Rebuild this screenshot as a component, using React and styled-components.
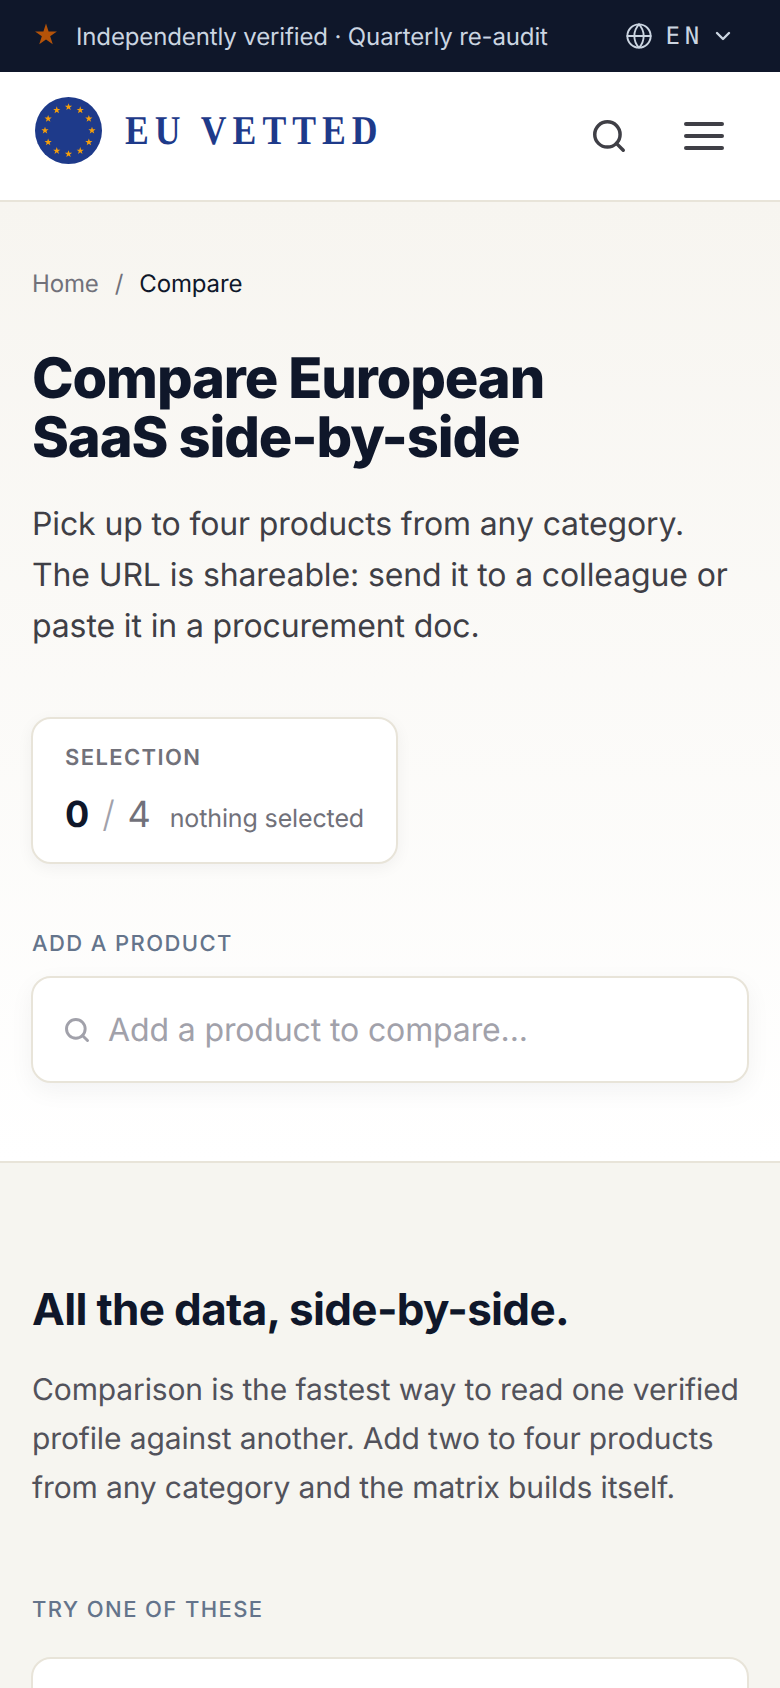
import React from 'react';
import styled, { createGlobalStyle } from 'styled-components';
import { Search, Globe, ChevronDown } from 'lucide-react';

const GlobalStyle = createGlobalStyle`
  html, body {
    margin: 0;
    padding: 0;
    background: #f6f5f0;
  }
  body {
    font-family: Inter, "Liberation Sans", sans-serif;
    color: #0f172a;
    letter-spacing: -0.13px;
    text-rendering: geometricPrecision;
  }
  * { box-sizing: border-box; }
`;

const Page = styled.div`
  height: 1688px;
  overflow: hidden;
`;

const TopBar = styled.div`
  height: 72px;
  background: #0f172a;
  color: #cbd5e1;
  display: flex;
  align-items: center;
  justify-content: space-between;
  padding: 0 45px 0 32px;
`;

const Claim = styled.div`
  display: flex;
  align-items: center;
  gap: 18px;
  font-size: 24px;
`;

const LangPicker = styled.div`
  display: flex;
  align-items: center;
  gap: 13px;
  font-family: "DejaVu Sans Mono", monospace;
  font-size: 24px;
  letter-spacing: 4.8px;
  svg:last-child {
    margin-left: -6px;
  }
`;

const Header = styled.header`
  height: 130px;
  background: #fff;
  border-bottom: 2px solid #e8e4d9;
  display: flex;
  align-items: center;
  justify-content: space-between;
  padding: 0 56px 0 35px;
`;

const Brand = styled.div`
  display: flex;
  align-items: center;
  gap: 23px;
  margin-bottom: 12px;
`;

const Wordmark = styled.div`
  font-family: "Liberation Serif", serif;
  font-weight: 700;
  font-size: 41px;
  line-height: 46px;
  letter-spacing: 6.9px;
  color: #1e3a8a;
  transform: scaleX(0.87);
  transform-origin: left center;
`;

const HeaderActions = styled.div`
  display: flex;
  align-items: center;
  gap: 56px;
  color: #3f3f46;
`;

const Burger = styled.div`
  width: 40px;
  display: flex;
  flex-direction: column;
  gap: 8px;
  span {
    display: block;
    height: 4px;
    border-radius: 2px;
    background: #3f3f46;
  }
`;

const Hero = styled.section`
  height: 961px;
  padding: 66px 32px 0;
  background: linear-gradient(180deg, #f7f5f0 0%, #ffffff 100%);
  border-bottom: 2px solid #e8e4d9;
`;

const Crumbs = styled.nav`
  display: flex;
  gap: 16px;
  font-size: 24px;
  line-height: 32px;
  color: #71717a;
  b {
    font-weight: 400;
    color: #0f172a;
  }
`;

const Title = styled.h1`
  margin: 49px 0 0;
  font-size: 56px;
  line-height: 59px;
  font-weight: 800;
  letter-spacing: -1.12px;
  color: #0f172a;
`;

const Lead = styled.p`
  margin: 31px 0 0;
  font-size: 32px;
  line-height: 51px;
  color: #3f3f46;
`;

const SelectionCard = styled.div`
  margin: 66px 0 0 -1px;
  display: flex;
  flex-direction: column;
  width: fit-content;
  height: 147px;
  padding: 26px 32px;
  background: #fff;
  border: 2px solid #e8e4d9;
  border-radius: 20px;
  box-shadow: 0 4px 16px rgba(15, 23, 42, 0.05);
`;

const SelectionLabel = styled.div`
  font-size: 22px;
  line-height: 26px;
  font-weight: 600;
  letter-spacing: 1.4px;
  color: #71717a;
`;

const Counter = styled.div`
  margin-top: 21px;
  display: flex;
  align-items: baseline;
  gap: 13px;
  font-size: 36px;
  line-height: 44px;
  white-space: nowrap;
  color: #71717a;
`;

const CountNum = styled.span`
  font-weight: 700;
  color: #0f172a;
`;

const Slash = styled.span`
  font-weight: 300;
  color: #a1a1aa;
`;

const CountNote = styled.span`
  font-size: 25px;
  margin-left: 6px;
`;

const FieldLabel = styled.div`
  font-size: 22px;
  line-height: 26px;
  font-weight: 500;
  letter-spacing: 1.4px;
  color: #64748b;
  margin-top: ${p => p.$top}px;
`;

const SearchBox = styled.div`
  margin: 19px -1px 0;
  height: 107px;
  display: flex;
  align-items: center;
  gap: 17px;
  padding: 0 30px;
  background: #fff;
  border: 2px solid #e8e4d9;
  border-radius: 20px;
  box-shadow: 0 8px 24px rgba(15, 23, 42, 0.05);
  color: #a1a1aa;
  font-size: 32px;
`;

const Info = styled.section`
  padding: 0 32px;
`;

const InfoTitle = styled.h2`
  margin: 0;
  padding-top: 119px;
  font-size: 44px;
  line-height: 54px;
  font-weight: 700;
  letter-spacing: -0.66px;
  color: #0f172a;
`;

const InfoText = styled.p`
  margin: 30px 0 0;
  font-size: 30px;
  line-height: 49px;
  color: #52525b;
`;

const SuggestCard = styled.div`
  margin: 34px -1px 0;
  height: 200px;
  background: #fff;
  border: 2px solid #e8e4d9;
  border-radius: 20px;
`;

function EuLogo() {
  const stars = Array.from({ length: 12 }, (_, i) => {
    const a = (i * Math.PI) / 6;
    return [33.5 + 23.5 * Math.sin(a), 33.5 - 23.5 * Math.cos(a)];
  });
  return (
    <svg width="67" height="67" viewBox="0 0 67 67">
      <circle cx="33.5" cy="33.5" r="33.5" fill="#1e3a8a" />
      {stars.map(([x, y], i) => (
        <polygon
          key={i}
          transform={`translate(${x} ${y}) scale(3.8)`}
          fill="#f59e0b"
          points="0,-1 0.24,-0.31 0.95,-0.31 0.38,0.12 0.59,0.81 0,0.4 -0.59,0.81 -0.38,0.12 -0.95,-0.31 -0.24,-0.31"
        />
      ))}
    </svg>
  );
}

function ClaimStar() {
  return (
    <svg width="26" height="26" viewBox="0 0 26 26">
      <polygon
        fill="#b45309"
        points="14,0.5 16.59,8.44 24.94,8.45 18.18,13.36 20.76,21.3 14,16.4 7.24,21.3 9.82,13.36 3.06,8.45 11.41,8.44"
      />
    </svg>
  );
}

export default function App() {
  return (
    <Page>
      <GlobalStyle />
      <TopBar>
        <Claim>
          <ClaimStar />
          Independently verified · Quarterly re-audit
        </Claim>
        <LangPicker>
          <Globe size={28} strokeWidth={1.6} />
          EN
          <ChevronDown size={24} strokeWidth={2.4} />
        </LangPicker>
      </TopBar>
      <Header>
        <Brand>
          <EuLogo />
          <Wordmark>EU VETTED</Wordmark>
        </Brand>
        <HeaderActions>
          <Search size={38} strokeWidth={2.2} />
          <Burger><span /><span /><span /></Burger>
        </HeaderActions>
      </Header>
      <Hero>
        <Crumbs>Home <span>/</span> <b>Compare</b></Crumbs>
        <Title>Compare European<br />SaaS side-by-side</Title>
        <Lead>
          Pick up to four products from any category.<br />
          The URL is shareable: send it to a colleague or<br />
          paste it in a procurement doc.
        </Lead>
        <SelectionCard>
          <SelectionLabel>SELECTION</SelectionLabel>
          <Counter>
            <CountNum>0</CountNum>
            <Slash>/</Slash>
            <span>4</span>
            <CountNote>nothing selected</CountNote>
          </Counter>
        </SelectionCard>
        <FieldLabel $top={67}>ADD A PRODUCT</FieldLabel>
        <SearchBox>
          <Search size={28} strokeWidth={2.5} />
          Add a product to compare...
        </SearchBox>
      </Hero>
      <Info>
        <InfoTitle>All the data, side-by-side.</InfoTitle>
        <InfoText>
          Comparison is the fastest way to read one verified<br />
          profile against another. Add two to four products<br />
          from any category and the matrix builds itself.
        </InfoText>
        <FieldLabel $top={84}>TRY ONE OF THESE</FieldLabel>
        <SuggestCard />
      </Info>
    </Page>
  );
}
